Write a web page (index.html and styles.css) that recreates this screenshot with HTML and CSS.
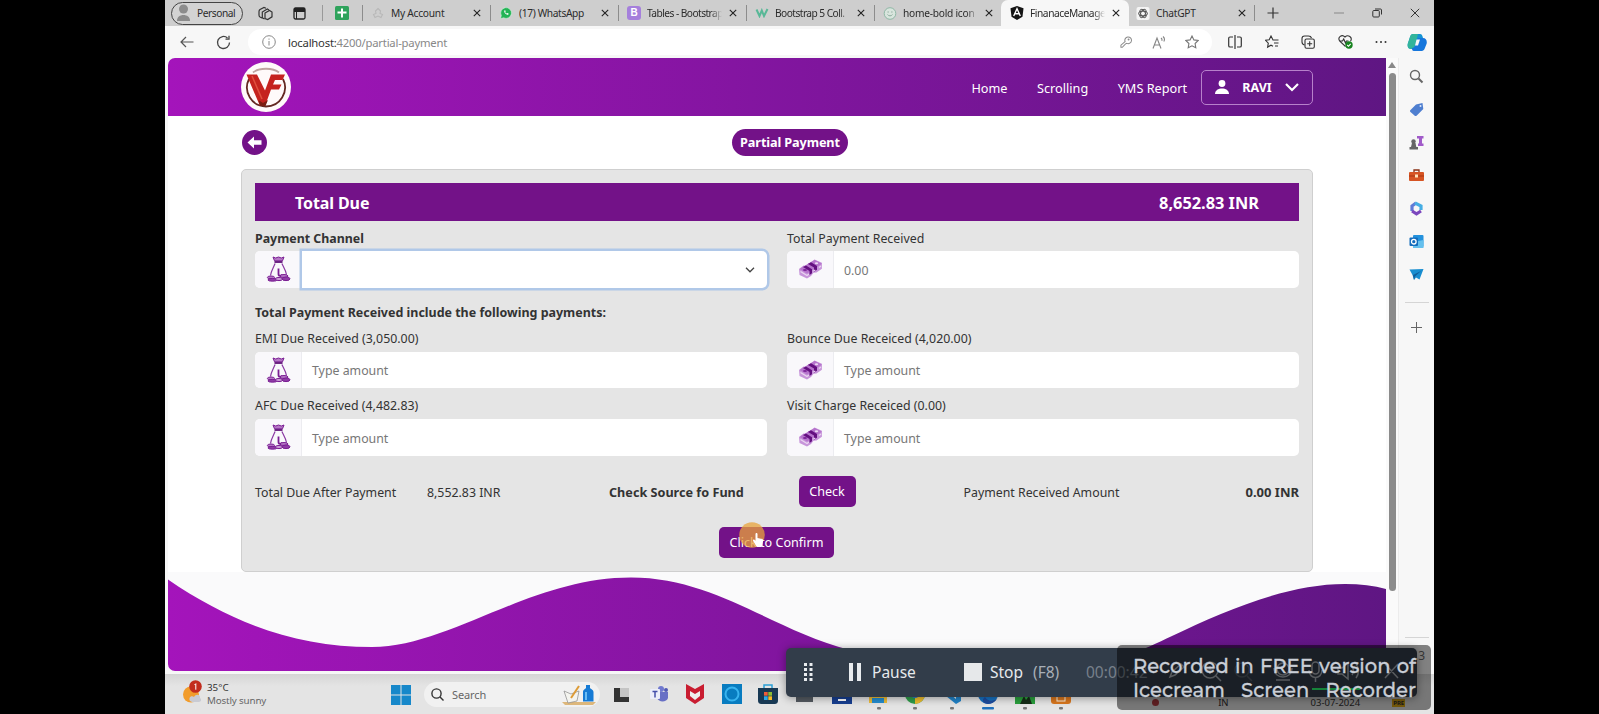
FILE: index.html
```html
<!DOCTYPE html>
<html lang="en">
<head>
<meta charset="utf-8">
<title>FinanaceManagement</title>
<link rel="stylesheet" href="styles.css">
</head>
<body>
<svg class="defs" width="0" height="0">
  <symbol id="x" viewBox="0 0 8 8"><path d="M.8.8l6.4 6.4M7.2.8L.8 7.2" stroke="#222" stroke-width="1.1"/></symbol>
  <symbol id="bag" viewBox="0 0 24 26">
    <path d="M6.500 1l2.700 1 2.800-1 2.800 1 2.700-1-1.500 3.800H8z" fill="#b678c6" stroke="#7a1d93" stroke-width="1"/>
    <path d="M8 6h8" stroke="#5f1178" stroke-width="1.800"/>
    <path d="M8.600 7.500C7 11.500 4.500 15 4 19.500M15.400 7.500c1.600 3.500 4 7 4.600 11" fill="none" stroke="#8a38a2" stroke-width="1.200"/>
    <path d="M12 12.500v5.500c0 2.500 3 2 3.500.5" fill="none" stroke="#7a1d93" stroke-width="1.800"/>
    <ellipse cx="4.500" cy="21.500" rx="3.600" ry="1.500" fill="#b57ac5" stroke="#7a1d93"/>
    <ellipse cx="6" cy="23.800" rx="4.600" ry="1.400" fill="#8f3ca6" stroke="#7a1d93"/>
    <ellipse cx="12.500" cy="23" rx="3.600" ry="1.600" fill="#c99ad5" stroke="#7a1d93"/>
    <ellipse cx="17.500" cy="20" rx="4" ry="1.500" fill="#b57ac5" stroke="#7a1d93"/>
    <ellipse cx="19.500" cy="22.800" rx="4" ry="1.800" fill="#8f3ca6" stroke="#7a1d93"/>
  </symbol>
  <symbol id="cash" viewBox="0 0 24 20">
    <path d="M.5 10L5 6.500 8 7 10 4l3 .3L16 .5l7.400 3.200v6L18 13.500l-3 .3-2.500 3.200-4 2.600L1 16z" fill="#c795da"/>
    <path d="M1 10L16 .8l7.400 4L8.500 14.500z" fill="#b674cc"/>
    <path d="M4.500 8l6.500 4v4l2.500-1.700v-4L7.500 6.500zM9.500 5l6 3.500v4.200l3-2V7L12.500 3.300z" fill="#641080"/>
    <path d="M2 12.500l6.500 4 2-1.500M15 12l1.800-1M20.500 8.500l2-1.500" fill="none" stroke="#ead6f1" stroke-width="1.200"/>
    <ellipse cx="6.500" cy="11" rx="2" ry="1.100" fill="#7d259b"/><ellipse cx="18" cy="4.300" rx="1.700" ry="1" fill="#ecd8f3"/>
  </symbol>
</svg>

<div class="screen">
  <div class="tabs">
    <div class="profile"><svg width="15" height="18" viewBox="0 0 15 18"><circle cx="7.500" cy="5" r="4.500" fill="#8c8c8c"/><path d="M1 17c-.5-8 13.500-8 13 0z" fill="#8c8c8c"/></svg><span>Personal</span></div>
    <svg class="t-work" width="15" height="15" viewBox="0 0 15 15" fill="none" stroke="#333" stroke-width="1.200"><path d="M4 12L2 11c-.8-.5-1-1.200-1-2V5.500c0-1 .3-1.500 1-2L6 1.500l2 .8M6.500 13L4.300 11.800V6l5-3L11 4"/><path d="M7 7l4.500-2.500L14 6v4.800l-4.300 2.700L7 12.500z"/></svg>
    <svg class="t-actions" width="13" height="13" viewBox="0 0 13 13"><rect x="1" y="1" width="11" height="11" rx="1.500" fill="none" stroke="#222" stroke-width="1.300"/><path d="M1 1h11v4H1z" fill="#222"/><path d="M3.500 5v7" stroke="#222"/></svg>
    <i class="sep s1"></i>
    <svg class="t-sheet" width="14" height="14" viewBox="0 0 14 14"><rect width="14" height="14" rx="1.500" fill="#2fa35c"/><path d="M7 2.500v9M2.500 6.500h9" stroke="#fff" stroke-width="2"/></svg>
    <div class="tab a"><svg width="12" height="12" viewBox="0 0 12 12" fill="none" stroke="#b8b8b8" stroke-width="1.100"><path d="M6 1.500L8.500 4 8 6.500l2.500 1L9 10.500 6 9l-3 1.500-1.500-3 2.500-1L3.500 4z"/></svg><span>My Account</span><svg class="x"><use href="#x"/></svg></div>
    <div class="tab b"><svg width="12" height="12" viewBox="0 0 12 12"><path d="M.5 11.700L1.300 8.500A5.400 5.400 0 1 1 3.600 10.800z" fill="#22b455" stroke="#d9f3e0" stroke-width=".6"/><path d="M4.300 3.500c-.6 2 2 4.700 4 4.200l.3-1.200-1.300-.6-.6.600c-.8-.3-1.300-.8-1.500-1.500l.5-.5-.5-1.200z" fill="#fff"/></svg><span>(17) WhatsApp</span><svg class="x"><use href="#x"/></svg></div>
    <div class="tab c"><i class="bs">B</i><span>Tables - Bootstrap</span><svg class="x"><use href="#x"/></svg></div>
    <div class="tab d"><svg width="13" height="10" viewBox="0 0 13 10"><path d="M1 1.500l3 6.500 2.300-5.500L8.500 8 12 1" fill="none" stroke="#58b897" stroke-width="2"/></svg><span>Bootstrap 5 Coll.</span><svg class="x"><use href="#x"/></svg></div>
    <div class="tab e"><svg width="13" height="13" viewBox="0 0 13 13"><circle cx="6.500" cy="6.500" r="5.800" fill="#d8e5dd" stroke="#8fb8a6"/><path d="M4 5h1.300M7.700 5H9M4 7.500c1 1.800 4 1.800 5 0" fill="none" stroke="#8eab9d"/></svg><span>home-bold icon</span><svg class="x"><use href="#x"/></svg></div>
    <div class="tab f"><svg width="14" height="14" viewBox="0 0 14 14"><path d="M7 0l6.500 2.300-1 8.400L7 14l-5.500-3.300-1-8.400z" fill="#151515"/><path d="M3.700 10L7 2.800 10.300 10M5 7.800h4" fill="none" stroke="#fff" stroke-width="1.400"/></svg><span>FinanaceManage</span><svg class="x"><use href="#x"/></svg></div>
    <div class="tab g"><svg width="13" height="13" viewBox="0 0 13 13"><rect width="13" height="13" rx="2" fill="#f4f4f4"/><g fill="none" stroke="#555" stroke-width="1"><ellipse cx="6.500" cy="6.500" rx="4.500" ry="2.300"/><ellipse cx="6.500" cy="6.500" rx="4.500" ry="2.300" transform="rotate(60 6.500 6.500)"/><ellipse cx="6.500" cy="6.500" rx="4.500" ry="2.300" transform="rotate(120 6.500 6.500)"/></g></svg><span>ChatGPT</span><svg class="x"><use href="#x"/></svg></div>
    <div class="winctl">
      <svg width="12" height="12" viewBox="0 0 12 12"><path d="M6 .5v11M.5 6h11" stroke="#333" stroke-width="1.200"/></svg>
      <svg width="10" height="10" viewBox="0 0 10 10"><path d="M0 5h10" stroke="#888"/></svg>
      <svg width="10" height="10" viewBox="0 0 10 10" fill="none" stroke="#333"><rect x=".8" y="2.500" width="6.500" height="6.500" rx="1"/><path d="M3 1h5.500c.6 0 1 .4 1 1v4.500"/></svg>
      <svg width="10" height="10" viewBox="0 0 10 10"><path d="M.8.8l8.400 8.400M9.200.8L.8 9.200" stroke="#333"/></svg>
    </div>
  </div>

  <div class="toolbar">
    <svg class="back" width="14" height="12" viewBox="0 0 14 12" fill="none" stroke="#555" stroke-width="1.200"><path d="M13.500 6H1M6 1L1 6l5 5"/></svg>
    <svg class="reload" width="15" height="15" viewBox="0 0 15 15" fill="none" stroke="#444" stroke-width="1.300"><path d="M13.500 7.500a6 6 0 1 1-2-4.500M13 .8v3.400H9.500"/></svg>
    <div class="address">
      <svg width="14" height="14" viewBox="0 0 14 14" fill="none" stroke="#888"><circle cx="7" cy="7" r="6.300"/><path d="M7 6v4.500M7 3.500v1.200"/></svg>
      <span class="url"><b>localhost:</b>4200/partial-payment</span>
      <svg class="key" width="12" height="12" viewBox="0 0 13 13" fill="none" stroke="#8b8b8b" stroke-width="1.100"><path d="M5.500 6A3.600 3.600 0 1 1 7.500 8L6 8.500 2.500 12.200H1V10z"/><circle cx="9.300" cy="3.700" r=".5"/></svg>
      <svg width="14" height="13" viewBox="0 0 14 13" fill="none" stroke="#858585" stroke-width="1.100"><path d="M1 12.500L5 2l4 10.500M2.500 9h5M9 2c1.200 1 1.200 2 .7 2.800M11 .5c1.700 1.500 1.700 3.500.8 5"/></svg>
      <svg width="14" height="14" viewBox="0 0 14 14" fill="none" stroke="#777" stroke-width="1.100"><path d="M7 1l1.900 3.900 4.300.6-3.100 3 .7 4.300L7 10.800l-3.800 2 .7-4.300-3.100-3 4.300-.6z"/></svg>
    </div>
    <div class="tools">
      <svg width="14" height="14" viewBox="0 0 14 14" fill="none" stroke="#333" stroke-width="1.200"><path d="M5 2H2c-.8 0-1.300.5-1.300 1.300v7.400c0 .8.500 1.300 1.300 1.300h3M9 2h3c.8 0 1.300.5 1.300 1.300v7.400c0 .8-.5 1.300-1.300 1.300H9M7 0v14"/></svg>
      <svg width="14" height="14" viewBox="0 0 14 14" fill="none" stroke="#333" stroke-width="1.100"><path d="M9.500 5H8L6 1 4.200 4.700l-3.700.6 2.800 2.800-.7 4L6 10.200l2 1M9 5h4.500M9 8h4.500M10 11h3"/></svg>
      <svg width="14" height="14" viewBox="0 0 14 14" fill="none" stroke="#333" stroke-width="1.100"><path d="M3.500 10C1.500 9.500 1 8.500 1 7V3.500C1 2 2 1 3.500 1h4c1.500 0 2.500.5 3 2"/><rect x="4" y="4" width="9.300" height="9.300" rx="1.500"/><path d="M8.700 6.200v5M6.200 8.700h5"/></svg>
      <svg width="15" height="14" viewBox="0 0 15 14" fill="none" stroke="#333" stroke-width="1.100"><path d="M7.500 11.500L1.800 6.200C-1 2 4-1.200 7 2c3-3 8 .2 5.500 4.200M1.500 6h3l1.200-2L7.500 8l1-2h2"/><circle cx="11" cy="10" r="3.700" fill="#17831f" stroke="none"/><path d="M9.200 10l1.300 1.300 2.200-2.500" stroke="#fff"/></svg>
      <svg width="12" height="4" viewBox="0 0 12 4" fill="#333"><circle cx="1.500" cy="2" r="1"/><circle cx="6" cy="2" r="1"/><circle cx="10.500" cy="2" r="1"/></svg>
      <svg class="copilot" width="20" height="19" viewBox="0 0 20 19"><path d="M6 1h7c2 0 2.500 2 3 4l-3 8c-.7 2-2 3-4 3H4c-3 0-4-3-3-6l2-6C3.500 2 4.500 1 6 1z" fill="#1593d3"/><path d="M6 1h5L8 12c-.5 2-1.500 3.500-4 4-3 0-4-3-3-6l2-6C3.500 2 4.500 1 6 1z" fill="#32b59b"/><path d="M14 18H7c-2 0-2-2-2-3 2 0 3-1 3.500-3L11 5h5c3 0 4.500 3 3.500 6l-2 5c-.7 1.500-2 2-3.500 2z" fill="#1676dc"/><path d="M9.500 6.500h3.500l-2 6H8z" fill="#f7f7f7"/></svg>
    </div>
  </div>

  <div class="body">
    <main class="page">
      <header class="nav">
        <svg class="logo" width="50" height="50" viewBox="0 0 50 50"><circle cx="25" cy="25" r="25" fill="#fffafa"/><path d="M8 17A19 19 0 1 0 42 17" fill="none" stroke="#642922" stroke-width="1.800"/><path d="M12 10.500C18 5.500 32 5.500 38 10.500" fill="none" stroke="#bfa3a0" stroke-width="1.800"/><path d="M5.500 12.500H16l8 16 6-16h14l-2.500 5.500H34L32 22.500h8.500l-2.500 5h-8L24 44h-5z" fill="#c5231f"/><path d="M11 14l10 23" stroke="#e0503f" stroke-width="1.500"/><path d="M17.500 38l1.500 6h5.500L27 38l-5 3z" fill="#7b1d12"/></svg>
        <nav><a>Home</a><a>Scrolling</a><a>YMS Report</a></nav>
        <div class="user"><svg width="14" height="14" viewBox="0 0 14 14" fill="#fff"><circle cx="7" cy="3.500" r="3.400"/><path d="M0 14c0-7.300 14-7.300 14 0z"/></svg><b>RAVI</b><svg width="14" height="9" viewBox="0 0 14 9"><path d="M1 1l6 6 6-6" fill="none" stroke="#fff" stroke-width="2.200"/></svg></div>
      </header>
      <div class="titlebar">
        <svg width="25" height="25" viewBox="0 0 25 25"><circle cx="12.500" cy="12.500" r="12.500" fill="#731288"/><path d="M5.500 12.500L12 6.500v3.700h7.500v4.600H12v3.700z" fill="#fff"/></svg>
        <h1>Partial Payment</h1>
      </div>
      <section class="card">
        <div class="total"><span>Total Due</span><span>8,652.83 INR</span></div>
        <div class="grid first">
          <div class="field"><label><b>Payment Channel</b></label><div class="group focus"><i><svg class="bag"><use href="#bag"/></svg></i><div class="input"><svg width="10" height="6" viewBox="0 0 10 6"><path d="M1 .8l4 4 4-4" fill="none" stroke="#444" stroke-width="1.300"/></svg></div></div></div>
          <div class="field"><label>Total Payment Received</label><div class="group"><i><svg class="cash"><use href="#cash"/></svg></i><div class="input">0.00</div></div></div>
        </div>
        <h2>Total Payment Received include the following payments:</h2>
        <div class="grid">
          <div class="field"><label>EMI Due Received (3,050.00)</label><div class="group"><i><svg class="bag"><use href="#bag"/></svg></i><div class="input">Type amount</div></div></div>
          <div class="field"><label>Bounce Due Receiced (4,020.00)</label><div class="group"><i><svg class="cash"><use href="#cash"/></svg></i><div class="input">Type amount</div></div></div>
          <div class="field"><label>AFC Due Received (4,482.83)</label><div class="group"><i><svg class="bag"><use href="#bag"/></svg></i><div class="input">Type amount</div></div></div>
          <div class="field"><label>Visit Charge Receiced (0.00)</label><div class="group"><i><svg class="cash"><use href="#cash"/></svg></i><div class="input">Type amount</div></div></div>
        </div>
        <div class="summary"><span>Total Due After Payment</span><span>8,552.83 INR</span><b>Check Source fo Fund</b><a class="btn">Check</a><span>Payment Received Amount</span><b class="amount">0.00 INR</b></div>
        <div class="confirm"><a class="btn">Click to Confirm
          <svg class="cursor" width="28" height="30" viewBox="0 0 28 30"><circle cx="13" cy="13" r="12.800" fill="#e8a33a" opacity=".75"/><path d="M16.500 12c0-1.500 2-1.500 2 0v4l4.500 1c1 .3 1.300 1 1.100 2l-.8 4.500c-.2 1-.8 1.500-1.800 1.500H19c-1 0-1.500-.5-2-1.300L14.200 19c-.7-1.300.7-2 1.400-1l.9 1z" fill="#fff"/></svg></a></div>
      </section>
      <svg class="wave" width="1218" height="99" viewBox="0 0 1218 99"><defs><linearGradient id="g"><stop stop-color="#a414bb"/><stop offset="1" stop-color="#5f1683"/></linearGradient></defs><path d="M0 7.500C62 50 127 75 204 75C282 75 362 5.500 463 5.500C547 5.500 604 58 682 78C750 92 820 99 880 99C945 92 975 78 1004 64C1058 38 1120 12 1177 12Q1200 12 1218 17V99H0z" fill="url(#g)"/></svg>
    </main>
    <div class="scroll"><i></i><b></b></div>
    <aside class="side">
      <svg width="15" height="15" viewBox="0 0 15 15" fill="none" stroke="#666" stroke-width="1.400"><circle cx="6" cy="6" r="4.500"/><path d="M9.500 9.500l4 4" stroke-width="2"/></svg>
      <svg width="15" height="15" viewBox="0 0 15 15"><path d="M7 2.500L13.500 1l.8 6-6.500 6.500c-1 .8-1.600.8-2.300 0L1.500 10c-.7-.8-.7-1.300 0-2z" fill="#4f7fd0"/><circle cx="11.500" cy="4" r="1" fill="#dfe9fa"/></svg>
      <svg width="15" height="15" viewBox="0 0 15 15"><circle cx="4.500" cy="6.500" r="2.200" fill="#666"/><path d="M3 8h3.500l.8 4H9v2.500H.5V12H2z" fill="#666"/><path d="M8 1h6.500v2.500H13v5h1.500V11H9V8.500h1v-5H8z" fill="#a15bc9"/></svg>
      <svg width="15" height="15" viewBox="0 -1 15 15"><path d="M5 3V1h5v2" fill="none" stroke="#8b3216" stroke-width="1.300"/><rect y="3" width="15" height="9" rx="1" fill="#d65423"/><path d="M0 7h15" stroke="#a93512"/><rect x="6" y="5.500" width="3" height="3" fill="#ffe3ba"/></svg>
      <svg width="15" height="15" viewBox="0 0 15 15" fill="none" stroke-width="3.200"><path d="M3 10V5l4-3" stroke="#5f7ad6"/><path d="M6 2l6 3v4" stroke="#46aee4"/><path d="M3 10l4.500 2.800L12 10" stroke="#7b47bd"/></svg>
      <svg width="15" height="15" viewBox="0 0 15 15"><rect x="4" y="1" width="10.500" height="12" rx="1" fill="#2492dd"/><path d="M4 8l10.500-2v8H4z" fill="#65c0ed"/><rect x=".5" y="3.500" width="8.500" height="8.500" rx="1" fill="#136cbc"/><circle cx="4.800" cy="7.700" r="2.300" fill="none" stroke="#fff" stroke-width="1.300"/></svg>
      <svg width="15" height="15" viewBox="0 -1 15 15"><path d="M.5 1.500L14.500 1 10.500 11.500 7 9.500 5 12 3.500 7z" fill="#198ed0"/><path d="M4 7L12 3 6 8.500 5 12z" fill="#125f9c"/></svg>
      <hr>
      <svg class="add" width="11" height="11" viewBox="0 0 11 11"><path d="M5.500 0v11M0 5.500h11" stroke="#666"/></svg>
      <hr class="low">
    </aside>
  </div>

  <div class="taskbar">
    <svg class="sun" width="19" height="24" viewBox="0 0 19 24"><circle cx="8" cy="14.500" r="8" fill="#f29c2b"/><path d="M7 21c-2-4 2-6 4-4 2-4 7-2 6 1 2 1 1 4-1 4H9z" fill="#c9cbd3"/><circle cx="12.500" cy="6.500" r="6.300" fill="#c22c1e"/><path d="M11.500 5l1.300-1.300v6" fill="none" stroke="#fff"/></svg>
    <div class="weather">35°C<br><span>Mostly sunny</span></div>
    <svg class="win" width="20" height="20" viewBox="0 0 20 20" fill="#1788ca"><path d="M0 0h9.500v9.500H0zM10.500 0H20v9.500h-9.500zM0 10.500h9.500V20H0zM10.500 10.500H20V20h-9.500z"/></svg>
    <div class="search"><svg width="13" height="13" viewBox="0 0 13 13" fill="none" stroke="#333" stroke-width="1.400"><circle cx="5.500" cy="5.500" r="4.600"/><path d="M9 9l3.500 3.500"/></svg><span>Search</span>
      <svg width="36" height="21" viewBox="0 0 36 21"><path d="M1 18h34l-3 3H4z" fill="#ddb77b"/><path d="M3 7l7 3 8-3-2 10-9 2z" fill="#f4f4ef" stroke="#888" stroke-width=".7"/><path d="M10 14L18 2" stroke="#dd9b36" stroke-width="2"/><path d="M22 8c0-2.500 2.500-3 3-4V1h4v3c.5 1 3.500 1.500 3.500 4v9.500H22z" fill="#167bd5"/><path d="M25 8v8" stroke="#69bcf5" stroke-width="2"/></svg></div>
    <div class="apps">
      <svg viewBox="0 0 20 20"><path d="M4 4h13v10H4z" fill="#c4c4c4"/><path d="M2 4h6v9h9v5H2z" fill="#333"/></svg>
      <svg viewBox="0 0 20 20"><circle cx="12" cy="5" r="3" fill="#7079cf"/><circle cx="17" cy="6" r="2" fill="#5059b4"/><path d="M8 8h11v6c-1 4-9 5-11 0z" fill="#6870c5"/><rect x="1" y="5" width="10" height="10" rx="1" fill="#eceefa"/><path d="M3.500 7.500h5M6 7.500v6" stroke="#4650aa" stroke-width="1.500"/></svg>
      <svg viewBox="0 0 20 20"><path d="M1 0l9 5 9-5v14l-9 6-9-6z" fill="#c91d31"/><path d="M5 7l5 3 5-3v5l-5 4-5-4z" fill="#eee"/></svg>
      <svg viewBox="0 0 20 20"><rect width="20" height="20" fill="#087cc0"/><circle cx="10" cy="10" r="6.500" fill="none" stroke="#39b4ef" stroke-width="2"/></svg>
      <svg viewBox="0 0 20 20"><path d="M6 4V1h8v3" fill="none" stroke="#2ba0d6" stroke-width="1.500"/><path d="M0 4h20v12c0 3-1 4-4 4H4c-3 0-4-1-4-4z" fill="#183954"/><path d="M6 8h3.700v3.700H6z" fill="#ef5d38"/><path d="M10.300 8H14v3.700h-3.700z" fill="#8bbd34"/><path d="M6 12.300h3.700V16H6z" fill="#2ba9e8"/><path d="M10.300 12.300H14V16h-3.700z" fill="#f7bb25"/></svg>
      <svg viewBox="0 0 20 20"><rect x="1" width="17" height="18" fill="#555b62"/></svg>
      <svg viewBox="0 0 20 20"><rect width="20" height="20" fill="#173f91"/><path d="M6 16h8" stroke="#fff" stroke-width="2"/></svg>
      <svg viewBox="0 0 20 20"><path d="M1 3h18v16H1z" fill="#efbd38"/><path d="M4 14h12v5H4z" fill="#258ed1"/></svg>
      <svg viewBox="0 0 20 20"><circle cx="10" cy="10" r="10" fill="#2f9e4a"/><path d="M10 10h10a10 10 0 0 1-10 10z" fill="#efbd2e"/><circle cx="10" cy="10" r="4" fill="#2f75d5"/></svg>
      <svg viewBox="0 0 20 20"><path d="M15 0l5 3v14l-5 3L0 8l3-3 12 10z" fill="#2183c9"/></svg>
      <svg viewBox="0 0 20 20"><circle cx="10" cy="10" r="10" fill="#1672c2"/><path d="M7 13c3 5 8 4 12 2-2 3-6 5-9 5-5 0-7-4-3-7z" fill="#1f4c9f"/></svg>
      <svg viewBox="0 0 20 20"><rect width="20" height="20" fill="#2aa03d"/><path d="M5 20l4-8 2 4 3-4 3 8z" fill="#162d18"/></svg>
      <svg viewBox="0 0 20 20"><rect width="20" height="20" rx="3" fill="#d9771e"/><rect x="6" y="9" width="8" height="8" fill="none" stroke="#fff3df"/></svg>
    </div>
    <div class="tray"><i></i><span>IN</span><span class="date">03-07-2024</span><em>PRE</em></div>
    <svg class="marks" width="190" height="3" viewBox="0 0 190 3"><g fill="#777"><rect x="2" width="4" height="2.500" rx="1"/><rect x="38" width="4" height="2.500" rx="1"/><rect x="75" width="4" height="2.500" rx="1"/><rect x="148" width="4" height="2.500" rx="1"/><rect x="184" width="4" height="2.500" rx="1"/></g><rect x="107" width="12" height="2.500" rx="1" fill="#1f70bd"/></svg>
  </div>
</div>

<div class="recorder">
  <svg width="9" height="18" viewBox="0 0 9 18" fill="#e8ebee"><path d="M0 0h3v3H0zM5.500 0h3v3h-3zM0 5h3v3H0zM5.500 5h3v3h-3zM0 10h3v3H0zM5.500 10h3v3h-3zM0 15h3v3H0zM5.500 15h3v3h-3z"/></svg>
  <svg class="pause" width="12" height="18" viewBox="0 0 12 18" fill="#e8ebee"><path d="M0 0h4v18H0zM8 0h4v18H8z"/></svg>
  <span class="p">Pause</span><i></i><span class="s">Stop</span><span class="k">(F8)</span><span class="time">00:00:42</span>
  <svg class="rtools" width="234" height="24" viewBox="0 0 234 24" fill="none" stroke="#a8adb4" stroke-width="1.500"><path d="M2 17l2-5 9-8 3 3-9 8z"/><circle cx="42" cy="10" r="8"/><path d="M48 16l5 5M38 10h8M42 6v8"/><g stroke="#545b64"><circle cx="74" cy="10" r="7"/><path d="M79 16l5 5"/></g><circle cx="115" cy="9" r="6"/><path d="M106 8c0 12 18 12 18 0M108 20h14"/><rect x="144" y="2" width="7" height="12" rx="3.500"/><path d="M141 10c0 10 13 10 13 0M147.500 18v4"/><path d="M170 8h4l6-5v16l-6-5h-4zM184 7q3 4 0 8M188 4q5 7 0 14M217 4l13 14M230 4l-13 14"/></svg>
</div>
<div class="mark"><i class="num">3</i><i class="green"></i><p>Recorded in FREE version of</p><p>Icecream Screen Recorder</p></div>
</body>
</html>
```
FILE: styles.css
```css
* { box-sizing: border-box; }
body { margin: 0; width: 1599px; height: 714px; overflow: hidden; background: #000; font: 12.350px "Noto Sans", "Open Sans", sans-serif; color: #333; position: relative; }
svg { flex: none; display: block; }
.defs { position: absolute; }
.screen { margin-left: 165px; width: 1269px; height: 714px; display: flex; flex-direction: column; background: #f7f7f7; }

.tabs { height: 26px; background: #cecece; display: flex; align-items: center; font-size: 10.200px; letter-spacing: -.250px; color: #2b2b2b; flex: none; }
.profile { margin-left: 6px; width: 72px; height: 23px; border: 1px solid #444; border-radius: 12px; display: flex; align-items: center; gap: 6px; padding-left: 4px; background: #d3d3d3; letter-spacing: -.450px; }
.t-work { margin-left: 15px; }
.t-actions { margin-left: 20px; }
.sep { width: 1px; height: 16px; background: #999; }
.s1 { margin-left: 16px; }
.t-sheet { margin-left: 12px; }
.tab { height: 26px; display: flex; align-items: center; position: relative; padding-left: 9px; width: 128px; flex: none; }
.tab::before { content: ""; position: absolute; left: 0; top: 5px; height: 16px; width: 1px; background: #8c8c8c; }
.tab > :first-child { width: 14px; margin-right: 6px; }
.tab span { width: 75px; overflow: hidden; white-space: nowrap; }
.c span, .d span { letter-spacing: -.550px; }
.f span { letter-spacing: -.450px; }
.c span, .d span, .e span, .f span { -webkit-mask-image: linear-gradient(90deg, #000 85%, transparent); mask-image: linear-gradient(90deg, #000 85%, transparent); }
.x { width: 8px; height: 8px; margin-left: 7px; }
.a { margin-left: 13px; }
.b span { letter-spacing: -.350px; }
.tab .bs { width: 14px; height: 14px; border-radius: 3px; background: #a57fdc; color: #fff; font: bold 10px/14px "Liberation Sans", sans-serif; text-align: center; letter-spacing: 0; }
.f { background: #f7f7f7; border-radius: 7px 7px 0 0; }
.f::before, .g::before { display: none; }
.e { width: 127px; }
.tab.g span { width: 80px; }
.g { width: 126px; padding-left: 7px; }
.g::after { content: ""; width: 1px; height: 16px; background: #8c8c8c; margin-left: 8px; }
.winctl { display: flex; align-items: center; margin-left: 12px; width: 156px; gap: 28px; }
.winctl svg:first-child { margin-right: 27px; }

.toolbar { height: 32px; flex: none; display: flex; align-items: center; background: #f7f7f7; }
.back { margin-left: 15px; }
.reload { margin-left: 22px; }
.address { margin-left: 17px; width: 964px; height: 26px; background: #fff; border-radius: 13px; display: flex; align-items: center; padding: 0 13px 0 14px; }
.url { margin-left: 12px; font-size: 11.300px; letter-spacing: -.220px; color: #888; }
.url b { font-weight: 400; color: #333; }
.key { margin: 0 20px 0 auto; }
.address svg:last-child { margin-left: 19px; }
.tools { display: flex; align-items: center; margin-left: 16px; gap: 22.500px; }
.copilot { margin-left: -3px; }

.body { display: flex; height: 614px; flex: none; padding-left: 3px; }
.page { width: 1218px; height: 613px; background: #fff; overflow: hidden; border-radius: 7px 0 0 7px; display: flex; flex-direction: column; }
.nav { height: 58px; flex: none; background: linear-gradient(90deg, #a414bb, #5f1683); display: flex; align-items: center; padding: 0 73px; color: #fff; }
.nav nav { display: flex; gap: 29.500px; margin-left: auto; margin-right: 14px; padding-top: 1px; font-size: 12.700px; }
.user { width: 112px; height: 35px; border: 1px solid #b781cb; border-radius: 5px; display: flex; align-items: center; justify-content: space-between; padding: 0 13px 0 13px; }
.user b { font-size: 12.500px; }
.titlebar { height: 53px; flex: none; display: flex; align-items: center; padding-left: 74px; }
h1 { margin: 0 0 0 465px; width: 116px; height: 27px; border-radius: 14px; background: #731288; color: #fff; font-size: 12.700px; line-height: 26px; text-align: center; letter-spacing: -.120px; }
.card { margin-left: 73px; width: 1072px; height: 403px; flex: none; background: #e5e5e5; border: 1px solid #cfcfcf; border-radius: 5px; padding: 13px; }
.total { height: 38px; background: #731288; color: #fff; font-size: 16px; font-weight: 700; display: flex; justify-content: space-between; align-items: center; padding: 1px 40px 0 40px; }
.total span:last-child { font-size: 16.350px; }
.total span:first-child { letter-spacing: -.100px; }
.grid { display: grid; grid-template-columns: 512px 512px; column-gap: 20px; row-gap: 5px; }
.first { margin-top: 4px; }
.first label { padding-top: 1px; }
.first .input { padding-top: 2px; }
label { display: block; height: 26px; line-height: 26px; white-space: nowrap; }
label b { font-size: 12.400px; }
.group { height: 36.500px; display: flex; background: #fff; border-radius: 5px; }
.group i { width: 46.500px; background: #f9f8fb; border-right: 1px solid #ececf0; border-radius: 5px 0 0 5px; display: flex; align-items: center; justify-content: center; }
.bag { width: 25px; height: 26px; margin-left: 1px; }
.cash { width: 25px; height: 20px; margin-left: 1px; }
.input { flex: 1; display: flex; align-items: center; padding: 2px 12px 0 10.500px; color: #777; }
.focus .input { justify-content: flex-end; border-radius: 0 5px 5px 0; box-shadow: 0 0 0 2.500px #b0c8e8; background: #fff; }
h2 { margin: 13px 0 0; font-size: 12.480px; line-height: 24px; height: 25px; }
.summary { margin-top: 20px; height: 31px; display: grid; grid-template-columns: 172px 182px 189.500px 165px 1fr auto; align-items: center; white-space: nowrap; }
.summary > span, .summary > b { padding-top: 2px; }
.summary b { font-size: 12.650px; }
.summary .amount { font-size: 13px; }
.btn { background: #731288; color: #fff; border-radius: 5px; height: 31px; display: flex; align-items: center; justify-content: center; position: relative; white-space: nowrap; font-size: 12.600px; padding-top: 1px; }
.summary .btn { width: 57px; }
.confirm { display: flex; justify-content: center; margin: 20px 0 0 -1px; }
.confirm .btn { width: 115px; }
.cursor { position: absolute; left: 20px; top: -5px; }
.wave { background: #fafafb; }
.scroll { width: 12px; display: flex; flex-direction: column; align-items: center; background: #fafafa; }
.scroll i { border: 4px solid transparent; border-top: 0; border-bottom: 6px solid #888; margin-top: 4px; }
.scroll b { width: 7px; height: 518px; background: #8b8b8b; border-radius: 4px; margin-top: 5px; }
.side { width: 36px; display: flex; flex-direction: column; align-items: center; gap: 18px; padding-top: 11px; border-left: 1px solid #ececec; }
.side hr { width: 24px; margin: 2px 0 0; border: 0; border-top: 1px solid #d5d5d5; }
.side hr.low { margin-top: 286px; }
.add { margin-top: 1px; }

.taskbar { margin-top: 2px; height: 40px; flex: none; background: linear-gradient(#d5d5d5, #e4e4e4 12px); display: flex; align-items: center; position: relative; }
.sun { margin: -5px 0 0 18px; }
.weather { margin-left: 5px; font-size: 9.800px; line-height: 13px; width: 176px; margin-top: -1px; color: #333; }
.weather span { color: #666; letter-spacing: -.150px; }
.win { margin-left: 8px; margin-top: 1px; }
.search { margin-left: 13px; width: 176px; height: 25px; background: #f1f1f1; border-radius: 13px; display: flex; align-items: center; padding: 0 3px 0 7px; font-size: 11px; letter-spacing: -.100px; color: #666; }
.search span { margin: 0 auto 0 8px; }
.apps { display: flex; gap: 16.600px; margin-left: 12px; }
.apps svg { width: 20px; height: 20px; }
.tray { display: flex; align-items: center; margin: 17px 0 0 81px; font-size: 9.500px; color: #333; }
.tray .date { margin-left: 82px; }
.tray i { width: 7px; height: 7px; background: #b43a40; border-radius: 50%; margin-right: 59px; }
.tray em { margin-left: 32px; background: #dca715; font: bold 6px "Noto Sans", sans-serif; padding: 0 1px; }
.marks { position: absolute; left: 710px; top: 33px; }
.recorder { position: absolute; left: 786px; top: 647.500px; width: 631px; height: 49px; border-radius: 5px; background: #323d4a; box-shadow: 0 1px 8px #0006; display: flex; align-items: center; padding-left: 18px; font-size: 15.500px; color: #e7eaed; }
.pause { margin: 0 11px 0 36px; }
.recorder .p { width: 92px; }
.recorder i { width: 18px; height: 18px; background: #e6e8ea; }
.recorder .s { margin-left: 8px; width: 43px; }
.k { width: 53px; color: #a9afb7; }
.time { width: 80px; color: #77808b; }
.rtools { margin-left: 2px; }
.mark { position: absolute; left: 1117px; top: 645px; width: 314px; height: 65px; border-radius: 5px; background: rgba(0,0,0,.48); padding: 10px 15px 0 16px; font: 500 19.500px/23.500px Montserrat, "Noto Sans", sans-serif; color: #c9ced6; }
.mark p { margin: 0; height: 23.500px; text-align: justify; text-align-last: justify; white-space: nowrap; position: relative; -webkit-text-stroke: .3px #c9ced6; }
.num { position: absolute; right: 6px; top: 2px; font: 12px "Noto Sans", sans-serif; color: #333; }
.green { position: absolute; left: 195px; top: 43px; width: 48px; height: 2px; background: #16833a; }
```
